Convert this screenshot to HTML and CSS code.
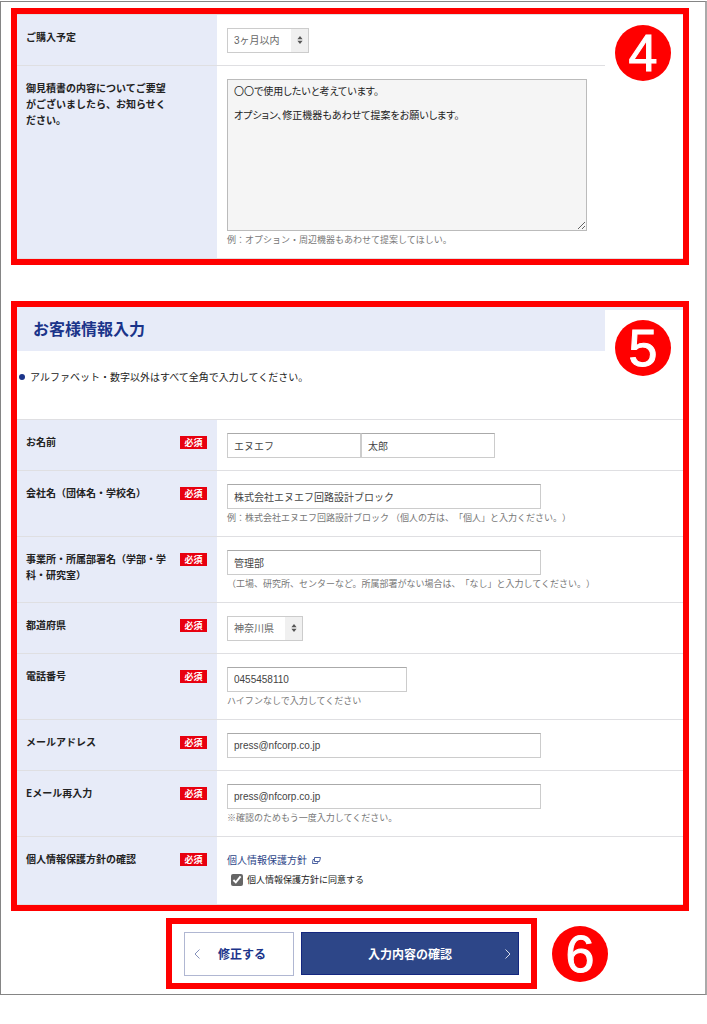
FILE: index.html
```
<!DOCTYPE html>
<html lang="ja">
	<head>
		<meta charset="utf-8" />
		<title>お客様情報入力</title>
		<link rel="stylesheet" href="styles.css">
	</head>
	<body>
		<form class="page" action="#" method="post">
			<section class="box">
				<span class="mask"><b class="num">4</b></span>
				<div class="row">
					<div class="head"><label for="plan">ご購入予定</label></div>
					<div class="cell">
						<span class="select">
							<select id="plan"><option>3ヶ月以内</option></select>
							<svg viewBox="0 0 6 8"><path d="M3 0L5.6 3.2H.4zM3 8L.4 4.8h5.2z"/></svg>
						</span>
					</div>
				</div>
				<div class="row">
					<div class="head"><label for="request">御見積書の内容についてご要望がございましたら、お知らせください。</label></div>
					<div class="cell">
						<textarea id="request">〇〇で使用したいと考えています。

オプション、修正機器もあわせて提案をお願いします。</textarea>
						<p class="note">例：オプション・周辺機器もあわせて提案してほしい。</p>
					</div>
				</div>
			</section>

			<section class="box customer">
				<span class="mask"><b class="num">5</b></span>
				<h2>お客様情報入力</h2>
				<ul class="lead">
					<li>アルファベット・数字以外はすべて全角で入力してください。</li>
				</ul>
				<div class="row">
					<div class="head"><label for="sei">お名前</label><em>必須</em></div>
					<div class="cell names">
						<input type="text" id="sei" value="エヌエフ" />
						<input type="text" id="mei" value="太郎" aria-label="名" />
					</div>
				</div>
				<div class="row">
					<div class="head"><label for="company">会社名（団体名・学校名）</label><em>必須</em></div>
					<div class="cell">
						<input type="text" id="company" value="株式会社エヌエフ回路設計ブロック" />
						<p class="note">例：株式会社エヌエフ回路設計ブロック （個人の方は、「個人」と入力ください。）</p>
					</div>
				</div>
				<div class="row">
					<div class="head"><label for="dept">事業所・所属部署名（学部・学科・研究室）</label><em>必須</em></div>
					<div class="cell">
						<input type="text" id="dept" value="管理部" />
						<p class="note">（工場、研究所、センターなど。所属部署がない場合は、「なし」と入力してください。）</p>
					</div>
				</div>
				<div class="row">
					<div class="head"><label for="pref">都道府県</label><em>必須</em></div>
					<div class="cell">
						<span class="select">
							<select id="pref"><option>神奈川県</option></select>
							<svg viewBox="0 0 6 8"><path d="M3 0L5.6 3.2H.4zM3 8L.4 4.8h5.2z"/></svg>
						</span>
					</div>
				</div>
				<div class="row">
					<div class="head"><label for="tel">電話番号</label><em>必須</em></div>
					<div class="cell">
						<input type="tel" id="tel" value="0455458110" />
						<p class="note">ハイフンなしで入力してください</p>
					</div>
				</div>
				<div class="row">
					<div class="head"><label for="mail">メールアドレス</label><em>必須</em></div>
					<div class="cell">
						<input type="email" id="mail" value="press@nfcorp.co.jp" />
					</div>
				</div>
				<div class="row">
					<div class="head"><label for="mail2">Eメール再入力</label><em>必須</em></div>
					<div class="cell">
						<input type="email" id="mail2" value="press@nfcorp.co.jp" />
						<p class="note">※確認のためもう一度入力してください。</p>
					</div>
				</div>
				<div class="row">
					<div class="head"><label for="agree">個人情報保護方針の確認</label><em>必須</em></div>
					<div class="cell privacy">
						<a class="policy" href="#">個人情報保護方針
							<svg viewBox="0 0 9 9"><path d="M2.5 1.5h6l-1 4h-5zM2.500 3.500h-1.500l-.5 4h5l.5-2"/></svg>
						</a>
						<label class="agree"><input type="checkbox" id="agree" checked />個人情報保護方針に同意する</label>
					</div>
				</div>
			</section>

			<div class="actions">
				<div class="box buttons">
					<button type="button" class="back"><svg viewBox="0 0 6 10"><path d="M5.5.5L1 5l4.500 4.500"/></svg>修正する</button>
					<button type="submit" class="next">入力内容の確認<svg viewBox="0 0 6 10"><path d="M.5.5L5 5 .5 9.500"/></svg></button>
				</div>
				<b class="num">6</b>
			</div>
		</form>
	</body>
</html>
```
FILE: styles.css
```
*{
	margin: 0;
	padding: 0;
	box-sizing: border-box;
}
body{
	padding-top: 1px;
	background: #fff;
	color: #222;
	font: 10px/16px "Noto Sans CJK JP", sans-serif;
	text-spacing-trim: space-all;
}
.page{
	border: 1px solid #858585;
	border-right: 2px solid #aaa;
	padding: 6px 16px 5px 10px;
}
.box{
	position: relative;
	border: 6px solid #f00;
}
.customer{
	margin-top: 36px;
}

/* numbers */
.mask{
	position: absolute;
	top: 3px;
	right: 0;
	padding: 8px 12px 4px 10px;
	background: #fff;
}
.customer .mask{
	padding: 10px 12px 2px 10px;
}
.num{
	display: block;
	width: 56px;
	height: 56px;
	border-radius: 50%;
	background: #f00;
	color: #fff;
	font: 52px/56px "Liberation Sans", Arial, sans-serif;
	-webkit-text-stroke: 1px #fff;
	text-align: center;
}

/* rows */
.row{
	display: grid;
	grid-template-columns: 200px 1fr;
	border-top: 1px solid #dfdfe2;
}
.row:last-child{
	border-bottom: 1px solid #dfdfe2;
}
.head{
	display: grid;
	grid-template-columns: 145px 27px;
	justify-content: space-between;
	align-items: start;
	padding: 14px 10px 12px 9px;
	background: #e7ebf8;
	font-weight: bold;
}
.head em{
	margin-top: 2px;
	background: #e8000f;
	color: #fff;
	font-size: 9px;
	line-height: 13px;
	font-style: normal;
	text-align: center;
}
.cell{
	padding: 13px 10px 12px 10px;
}
.privacy{
	padding-bottom: 14px;
}
input, select, textarea{
	border: 1px solid #ccc;
	background: #fff;
	color: #444;
	font: 10px/16px "Liberation Sans", "Noto Sans CJK JP", sans-serif;
}
input{
	display: block;
	width: 314px;
	height: 25px;
	padding: 0 6px;
	border-top-color: #aaa;
}
.names{
	display: flex;
}
.names input{
	width: 134px;
}
#tel{
	width: 180px;
}
textarea{
	display: block;
	width: 360px;
	height: 152px;
	padding: 6px;
	border-color: #bbb;
	background: #f5f5f5;
	color: #222;
	line-height: 12px;
	font-feature-settings: "palt";
}
.select{
	display: block;
	position: relative;
	width: fit-content;
}
select{
	display: block;
	appearance: none;
	height: 25px;
	padding: 0 28px 0 6px;
	background: linear-gradient(#f0f0f0, #f0f0f0) right / 17px 100% no-repeat #fff;
	color: #666;
}
.select svg{
	position: absolute;
	top: 8px;
	right: 6px;
	width: 6px;
	height: 8px;
	fill: #555;
}
.note{
	margin-top: 2px;
	color: #777;
	font-size: 9px;
	line-height: 13px;
}

/* customer */
h2{
	padding: 8px 16px 10px;
	background: #e7ebf8;
	color: #1b348a;
	font-size: 16px;
	line-height: 26px;
}
.lead{
	padding: 18px 2px 34px;
	list-style: none;
}
.lead li{
	display: flex;
	align-items: center;
	gap: 5px;
}
.lead li::before{
	content: "";
	width: 6px;
	height: 6px;
	border-radius: 50%;
	background: #1b348a;
}
.policy{
	display: flex;
	align-items: center;
	gap: 5px;
	color: #2d4688;
	line-height: 20px;
	text-decoration: none;
}
.policy svg{
	width: 9px;
	height: 9px;
	fill: none;
	stroke: #4a60a0;
}
.agree{
	display: flex;
	align-items: center;
	gap: 4px;
	padding-left: 4px;
	font-size: 9px;
	line-height: 20px;
}
.agree input{
	width: 12px;
	height: 12px;
	accent-color: #666;
}

/* buttons */
.actions{
	display: flex;
	align-items: center;
	gap: 15px;
	margin-top: 7px;
	padding-left: 155px;
}
.buttons{
	display: flex;
	align-items: flex-start;
	gap: 7px;
	padding: 8px 12px 7px;
}
button{
	display: flex;
	align-items: center;
	font: bold 12px/16px "Noto Sans CJK JP", sans-serif;
}
button svg{
	width: 6px;
	height: 10px;
	fill: none;
	stroke: #8490bb;
}
.back{
	gap: 18px;
	width: 110px;
	height: 44px;
	padding: 0 9px;
	border: 1px solid #b0b7d2;
	background: #fff;
	color: #1b348a;
}
.next{
	justify-content: flex-end;
	gap: 53px;
	width: 218px;
	height: 43px;
	padding: 0 7px;
	border: 1px solid #14277f;
	background: #2d4688;
	color: #fff;
}
.next svg{
	stroke: #d5daea;
}
```
